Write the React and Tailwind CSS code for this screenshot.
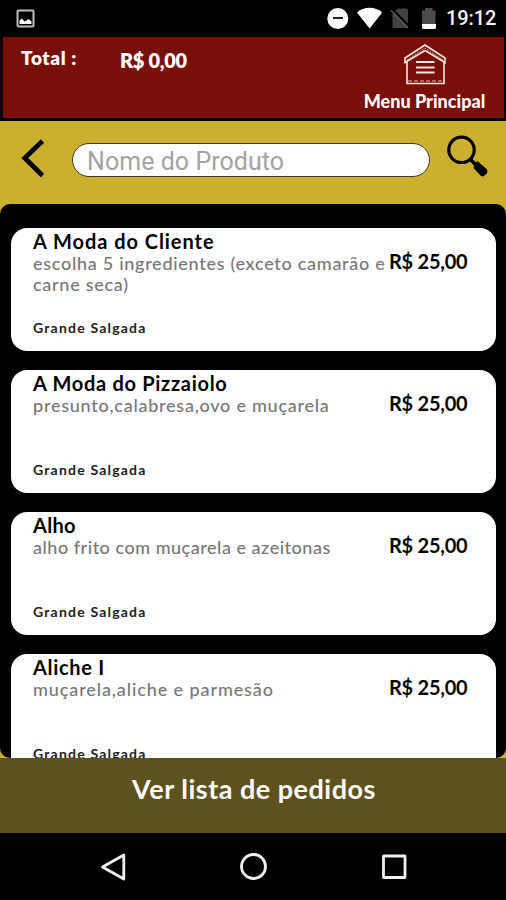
const products = [
  {
    name: 'A Moda do Cliente',
    description: 'escolha 5 ingredientes (exceto camarão e carne seca)',
    category: 'Grande Salgada',
    price: 'R$ 25,00',
    nameTracking: 'tracking-[0.95px]',
    descTracking: 'tracking-[0.72px]'
  },
  {
    name: 'A Moda do Pizzaiolo',
    description: 'presunto,calabresa,ovo e muçarela',
    category: 'Grande Salgada',
    price: 'R$ 25,00',
    nameTracking: 'tracking-[0.7px]',
    descTracking: 'tracking-[0.75px]'
  },
  {
    name: 'Alho',
    description: 'alho frito com muçarela e azeitonas',
    category: 'Grande Salgada',
    price: 'R$ 25,00',
    nameTracking: 'tracking-[0.3px]',
    descTracking: 'tracking-[0.52px]'
  },
  {
    name: 'Aliche I',
    description: 'muçarela,aliche e parmesão',
    category: 'Grande Salgada',
    price: 'R$ 25,00',
    nameTracking: 'tracking-[0.7px]',
    descTracking: 'tracking-[0.9px]'
  }
]

function StatusBar() {
  return (
    <div className="flex h-[37px] shrink-0 items-center justify-between bg-black pl-4 pr-[10px]">
      <svg className="h-[19px] w-[19px]" viewBox="0 0 19 19" fill="none">
        <rect x="1.5" y="1.5" width="16" height="16" rx="1" stroke="#bdbdbd" strokeWidth="2" />
        <path d="M3.500 15v-3.500l2.500-2 2.500 3 2-1 2-1.500 3 2.500V15z" fill="#fff" />
      </svg>
      <div className="flex items-center">
        <svg className="h-[30px] w-[116px]" viewBox="324 3 116 30">
          <circle cx="337.800" cy="17.500" r="10.500" fill="#fff" />
          <path d="M333 17h10" stroke="#222" strokeWidth="2" />
          <path d="M357 11.500c7-6.200 18-6.200 25.200 0L369.600 27.500z" fill="#fff" />
          <path d="M398 7.500h8.500a1.500 1.500 0 0 1 1.500 1.500v16.500a1.500 1.500 0 0 1-1.500 1.500H394a1.500 1.500 0 0 1-1.500-1.500V13z" fill="#424242" />
          <path d="M392.500 8.500l17 17" stroke="#000" strokeWidth="2" />
          <path d="M391 9.500l17 17.500" stroke="#555" strokeWidth="1.600" />
          <path d="M422 9.500h3V7h7.500v2.500h3V23H422z" fill="#4b4b4b" />
          <path d="M422 23h14v3.500a1.500 1.500 0 0 1-1.500 1.500h-11a1.500 1.500 0 0 1-1.500-1.500z" fill="#fff" />
        </svg>
        <span className="ml-[6px] w-[50px] whitespace-nowrap font-['Roboto',sans-serif] text-[20px] font-medium leading-[37px] tracking-[-0.1px] text-[#f4f4f4]">
          19:12
        </span>
      </div>
    </div>
  )
}

function Header() {
  return (
    <header className="ml-[3px] mr-[2px] flex h-[81px] shrink-0 justify-between bg-[#780f08] text-white">
      <div className="flex pl-[18px] pt-[9px] font-extrabold">
        <span className="w-[99px] text-[19px] leading-6 tracking-[0.6px]">Total :</span>
        <span className="text-[20px] leading-[28px] tracking-[-0.3px]">R$ 0,00</span>
      </div>
      <button className="mr-[18px] flex w-[123px] flex-col items-center pt-[6px]">
        <svg className="h-[44px] w-[44px]" viewBox="0 0 44 44" fill="none" stroke="#fbe6e2" strokeWidth="1.600">
          <path d="M2 15L22 2l20 13v4.500L22 7.500 2 19.500z" />
          <path d="M4 17L22 5l18 12" strokeWidth="0.700" strokeDasharray="2 1" />
          <path d="M4 19v21.500h37V19" />
          <path d="M5 38h35" strokeWidth="0.800" strokeDasharray="4 2" />
          <path d="M13 19h18.500M13 24.500h18.500M13 29.500h18.500" strokeWidth="1.800" />
        </svg>
        <span className="whitespace-nowrap text-[18px] font-black leading-[28px]">
          Menu Principal
        </span>
      </button>
    </header>
  )
}

function SearchBar() {
  return (
    <div className="flex h-[83px] shrink-0 items-start">
      <button className="ml-[20px] mt-[17px]">
        <svg className="h-[40px] w-[26px]" viewBox="0 0 26 40" fill="none">
          <path d="M22.500 3L4.800 20l17.700 17.500" stroke="#000" strokeWidth="4.800" />
        </svg>
      </button>
      <input
        className="ml-[26px] mt-[22px] h-[34px] w-[358px] rounded-full border border-[#3f3a26] bg-white pl-[14px] pt-[3px] font-['Roboto',sans-serif] text-[25px] tracking-[0.05px] text-black outline-none placeholder:text-[#a3a3a3]"
        placeholder="Nome do Produto"
      />
      <button className="ml-[16px] mt-[14px]">
        <svg className="h-[44px] w-[44px]" viewBox="0 0 44 44" fill="none" stroke="#000">
          <circle cx="15.500" cy="14.800" r="12.700" strokeWidth="3.200" />
          <path d="M24 24l5 5" strokeWidth="3.500" />
          <path d="M28.500 29l3-2 9 8v2.500l-3 3h-2l-7-7.500z" fill="#000" strokeWidth="1.500" strokeLinejoin="round" />
        </svg>
      </button>
    </div>
  )
}

function ProductCard({ product }) {
  return (
    <li className="flex h-[123px] shrink-0 rounded-[16px] bg-white pl-[22px] pr-[20px] pt-[2px]">
      <div className="flex w-[356px] shrink-0 flex-col">
        <h2 className={`whitespace-nowrap text-[20px] font-bold leading-[23px] text-black ${product.nameTracking}`}>
          {product.name}
        </h2>
        <p className={`h-[64px] text-[18px] font-medium leading-[21px] text-[#777] ${product.descTracking}`}>
          {product.description}
        </p>
        <span className="text-[14px] font-bold leading-[22px] tracking-[1.2px] text-[#222]">
          {product.category}
        </span>
      </div>
      <span className="mt-[18px] whitespace-nowrap text-[20px] font-bold leading-[26px] tracking-[-0.25px] text-black">
        {product.price}
      </span>
    </li>
  )
}

function NavBar() {
  return (
    <nav className="flex h-[67px] shrink-0 items-center justify-center gap-[112px] bg-black pl-px">
      <svg className="h-7 w-7" viewBox="0 0 28 28" fill="none" stroke="#f0f0f0" strokeWidth="2.800">
        <path d="M23.800 2v24L2.500 14z" strokeLinejoin="round" />
      </svg>
      <svg className="h-7 w-7" viewBox="0 0 28 28" fill="none" stroke="#f0f0f0" strokeWidth="2.800">
        <circle cx="13.500" cy="13.500" r="12" />
      </svg>
      <svg className="h-7 w-7" viewBox="0 0 28 28" fill="none" stroke="#f0f0f0" strokeWidth="2.800">
        <rect x="3.500" y="3" width="21.500" height="21.500" rx="0.500" />
      </svg>
    </nav>
  )
}

export default function App() {
  return (
    <div className="flex h-[900px] w-[506px] flex-col overflow-hidden bg-black font-['Lato',sans-serif]">
      <StatusBar />
      <Header />
      <main className="mt-[3px] flex h-[637px] shrink-0 flex-col bg-[#cbb02f]">
        <SearchBar />
        <ul className="flex h-[554px] flex-col gap-[19px] overflow-hidden rounded-[10px] bg-black pl-[11px] pr-[10px] pt-[24px]">
          {products.map((product) => (
            <ProductCard key={product.name} product={product} />
          ))}
        </ul>
      </main>
      <button className="h-[75px] shrink-0 bg-[#5d511d] pb-[13px] pl-[2px] text-[27px] font-bold leading-[62px] tracking-[0.5px] text-white">
        Ver lista de pedidos
      </button>
      <NavBar />
    </div>
  )
}
